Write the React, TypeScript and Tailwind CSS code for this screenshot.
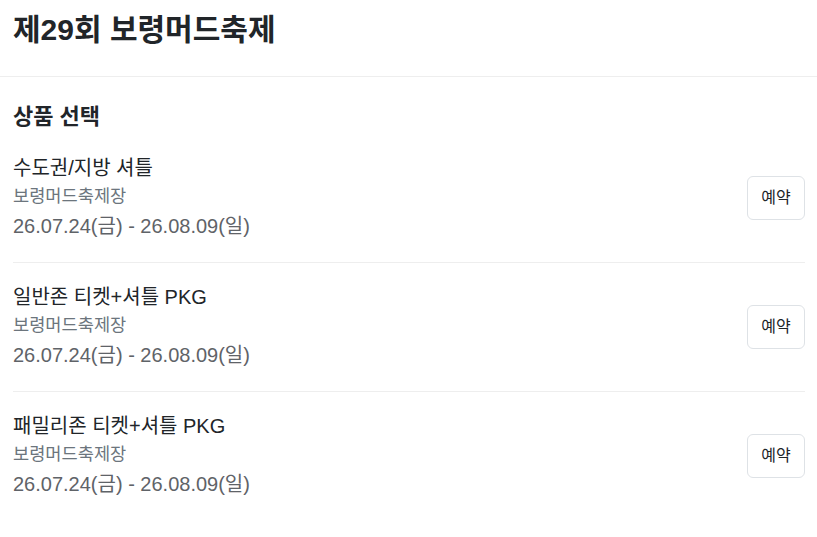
import React from "react";

const items = [
  { title: "수도권/지방 셔틀" },
  { title: "일반존 티켓+셔틀 PKG" },
  { title: "패밀리존 티켓+셔틀 PKG" },
];

export default function App() {
  return (
    <div
      className="min-h-[537px] bg-white text-[#212529]"
      style={{ fontFamily: '"Liberation Sans", Arial, "Noto Sans CJK KR", sans-serif' }}
    >
      <header className="px-[13px] pt-[7px] pb-[24px] border-b border-[#eeeeee]">
        <h1 className="text-[30px] font-bold leading-[45px]">제29회 보령머드축제</h1>
      </header>
      <section className="pl-[13px] pr-[12px] pt-[23px]">
        <h2 className="text-[22px] font-bold leading-[33px]">상품 선택</h2>
        <div className="mt-[20px]">
          {items.map((it, i) => (
            <div
              key={i}
              className={`flex items-center justify-between ${i < items.length - 1 ? "border-b border-[#eeeeee] pb-[19px] mb-[19px]" : ""}`}
            >
              <div className="flex flex-col">
                <div className="text-[20px] leading-[30px] text-[#212529]">{it.title}</div>
                <div className="text-[17.6px] leading-[26px] text-[#6c757d]">보령머드축제장</div>
                <div className="text-[20px] leading-[34px] text-[#5f6368]">26.07.24(금) - 26.08.09(일)</div>
              </div>
              <button className="w-[58px] h-[44px] rounded-[6px] border border-[#dee2e6] bg-white text-[16px] text-[#212529]">
                예약
              </button>
            </div>
          ))}
        </div>
      </section>
    </div>
  );
}
